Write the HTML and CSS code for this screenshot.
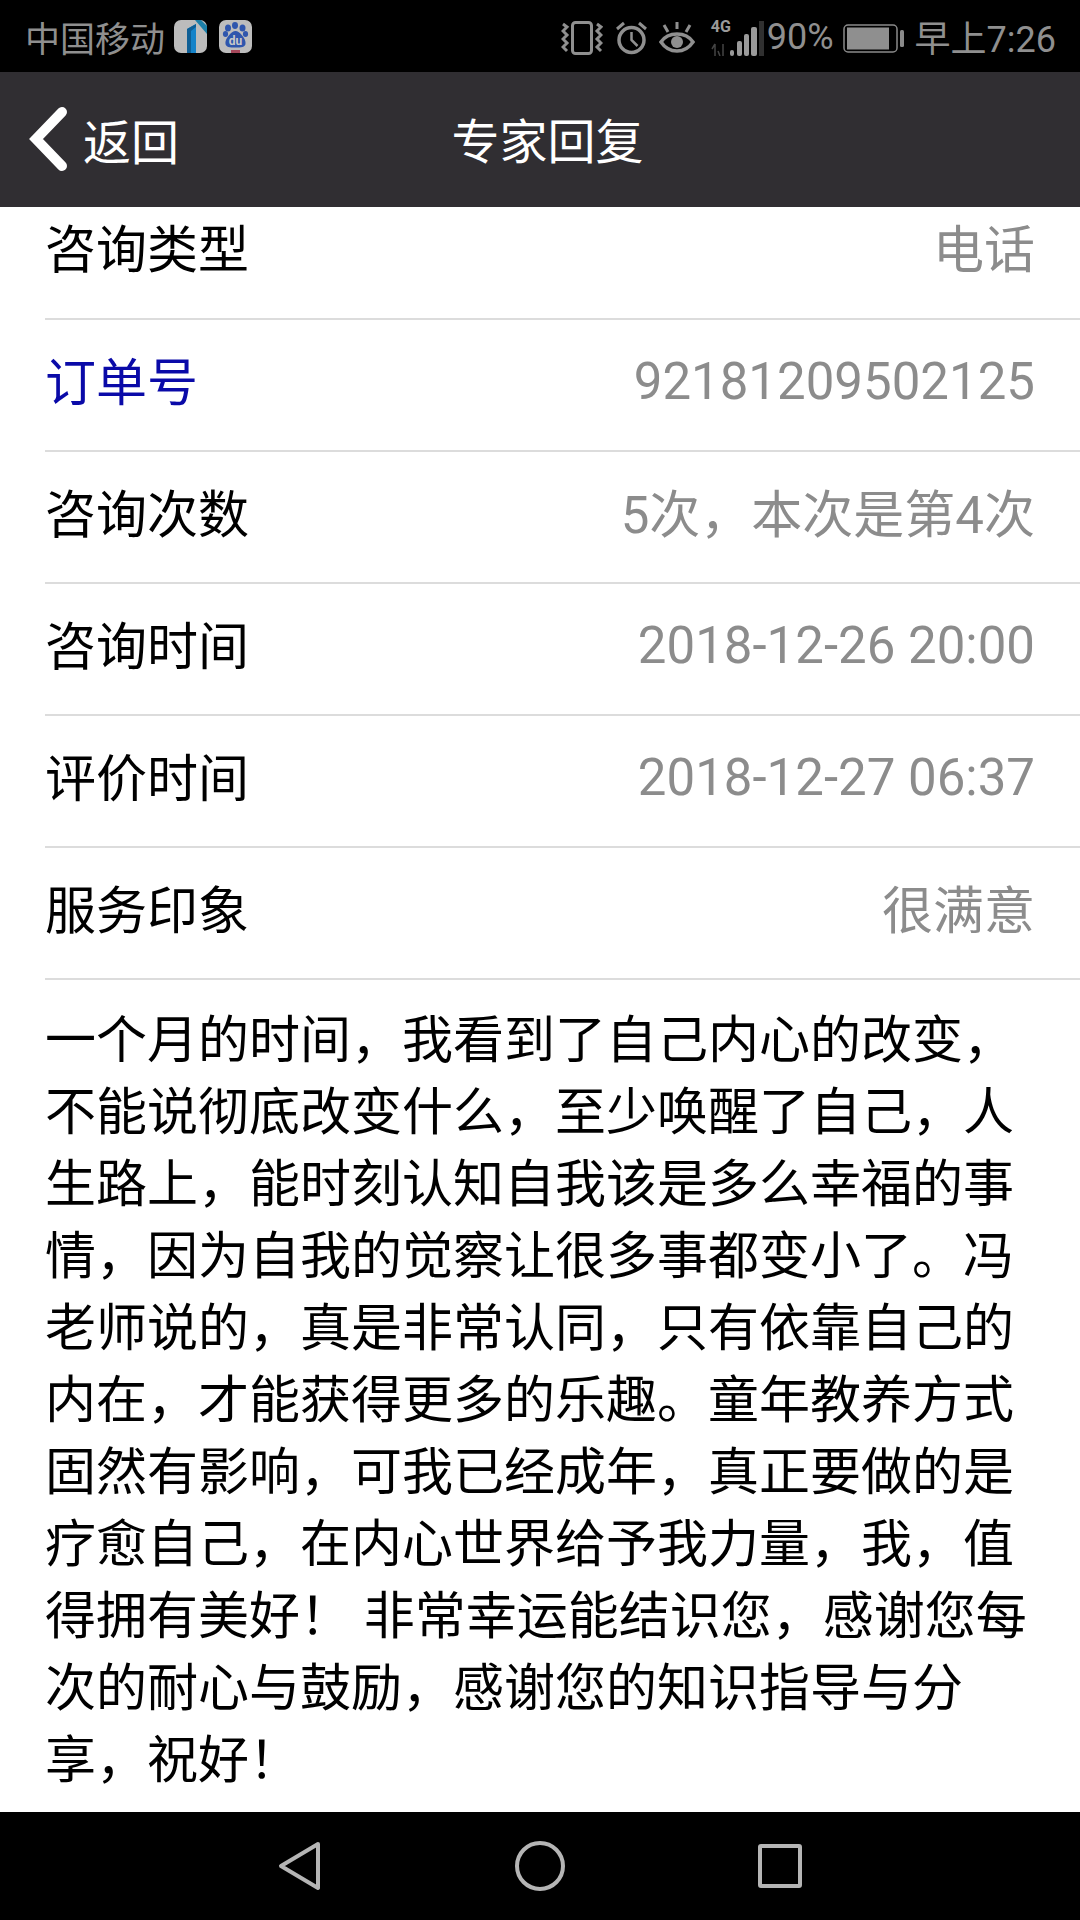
FILE: index.html
```html
<!DOCTYPE html>
<html lang="zh-CN">
<head>
    <meta charset="UTF-8">
    <title>专家回复</title>
    <link rel="stylesheet" href="styles.css">
</head>
<body>
    <div class="phone">
        <div class="status-bar">
            <div class="status-left">
                <span class="carrier">中国移动</span>
                <svg class="app-icon" viewBox="0 0 33 33">
                    <rect width="33" height="33" rx="7" fill="#bcbcbc"/>
                    <path d="M21 0h6l6 6v8z" fill="#1c7fa8"/>
                    <path d="M13 9l9-5v29h-9z" fill="#1583c9"/>
                    <path d="M13 9l9-5v3l-5 4v22h-4z" fill="#0f5f95"/>
                </svg>
                <svg class="app-icon" viewBox="0 0 33 33">
                    <rect width="33" height="33" rx="7" fill="#bdbdbd"/>
                    <g fill="#2f56ad">
                        <ellipse cx="9" cy="8" rx="3" ry="3.6"/>
                        <ellipse cx="16" cy="5.5" rx="3" ry="3.4"/>
                        <ellipse cx="23.5" cy="8" rx="3" ry="3.6"/>
                        <ellipse cx="6.5" cy="14" rx="2.6" ry="3"/>
                        <ellipse cx="26.5" cy="14" rx="2.6" ry="3"/>
                        <path d="M16.500 11c4 0 11 8 10 13-.5 3-4 3.500-10 3.500S7 27 6.500 24c-1-5 6-13 10-13z"/>
                    </g>
                    <text x="16.500" y="25" class="du">du</text>
                    <rect x="12" y="30" width="9" height="3" fill="#a5475a"/>
                </svg>
            </div>
            <div class="status-right">
                <svg class="s-icon vibrate" viewBox="0 0 42 34" fill="none" stroke="#8f8f8f" stroke-width="3">
                    <rect x="11.500" y="1.500" width="19" height="31" rx="3"/>
                    <path d="M2 3l4 3-4 4 4 4-4 4 4 4-4 4 4 4M36 3l4 3-4 4 4 4-4 4 4 4-4 4 4 4"/>
                </svg>
                <svg class="s-icon alarm" viewBox="0 0 33 34" fill="none" stroke="#8f8f8f" stroke-width="3.500">
                    <circle cx="16.500" cy="19" r="12.500"/>
                    <path d="M16.500 11v8l6 6" stroke-width="2.500"/>
                    <path d="M2 8l7-6M31 8l-7-6" stroke-width="3"/>
                </svg>
                <svg class="s-icon eye" viewBox="0 0 36 34" fill="none" stroke="#8f8f8f" stroke-width="3.500">
                    <path d="M2 21c4-6 9-8 16-8s12 2 16 8c-4 6-9 9-16 9s-12-3-16-9z"/>
                    <circle cx="18" cy="21" r="6" fill="#8f8f8f" stroke="none"/>
                    <path d="M18 1v7M5 4l4 7M31 4l-4 7" stroke-width="3"/>
                </svg>
                <div class="signal">
                    <span class="net">4G</span>
                    <svg class="bars" viewBox="0 0 53 35">
                        <path d="M4 23v12M9 35l-2-5M1 28l3-5M12 23v12" stroke="#444" stroke-width="1.500" fill="none"/>
                        <rect x="19" y="29" width="4" height="6" rx="2" fill="#9a9a9a"/>
                        <rect x="26" y="20" width="5" height="15" rx="2" fill="#9a9a9a"/>
                        <rect x="33" y="13" width="5" height="22" rx="2" fill="#9a9a9a"/>
                        <rect x="40" y="6" width="6" height="29" rx="2" fill="#9a9a9a"/>
                        <rect x="48" y="0" width="5" height="35" fill="#303030"/>
                    </svg>
                </div>
                <span class="status-text pct">90%</span>
                <svg class="battery" viewBox="0 0 61 29">
                    <rect x="1" y="1" width="53" height="27" rx="4" fill="none" stroke="#8a8a8a" stroke-width="1.500"/>
                    <rect x="4" y="3.500" width="42" height="22" fill="#8f8f8f"/>
                    <rect x="57" y="6" width="4" height="17" rx="1.500" fill="#8a8a8a"/>
                </svg>
                <span class="status-text time">早上7:26</span>
            </div>
        </div>

        <div class="nav-bar">
            <div class="back">
                <svg class="back-arrow" viewBox="0 0 38 66" fill="none" stroke="#fff" stroke-width="10" stroke-linecap="round">
                    <path d="M33 6L7 33l26 27"/>
                </svg>
                <span>返回</span>
            </div>
            <div class="nav-title">专家回复</div>
        </div>

        <div class="content">
            <div class="row first">
                <span class="label">咨询类型</span>
                <span class="value">电话</span>
            </div>
            <div class="row">
                <span class="label link">订单号</span>
                <span class="value num">92181209502125</span>
            </div>
            <div class="row">
                <span class="label">咨询次数</span>
                <span class="value">5次，本次是第4次</span>
            </div>
            <div class="row">
                <span class="label">咨询时间</span>
                <span class="value num">2018-12-26 20:00</span>
            </div>
            <div class="row">
                <span class="label">评价时间</span>
                <span class="value num">2018-12-27 06:37</span>
            </div>
            <div class="row">
                <span class="label">服务印象</span>
                <span class="value">很满意</span>
            </div>
            <p class="comment">一个月的时间，我看到了自己内心的改变，不能说彻底改变什么，至少唤醒了自己，人生路上，能时刻认知自我该是多么幸福的事情，因为自我的觉察让很多事都变小了。冯老师说的，真是非常认同，只有依靠自己的内在，才能获得更多的乐趣。童年教养方式固然有影响，可我已经成年，真正要做的是疗愈自己，在内心世界给予我力量，我，值得拥有美好！ 非常幸运能结识您，感谢您每次的耐心与鼓励，感谢您的知识指导与分享，祝好！</p>
        </div>

        <div class="bottom-bar">
            <svg class="nav-key" viewBox="0 0 50 50" fill="none" stroke="#b5b5b5" stroke-width="4" stroke-linejoin="round">
                <path d="M43 3L6 25l37 22z"/>
            </svg>
            <svg class="nav-key" viewBox="0 0 50 50" fill="none" stroke="#b5b5b5" stroke-width="4">
                <circle cx="25" cy="25" r="23"/>
            </svg>
            <svg class="nav-key" viewBox="0 0 50 50" fill="none" stroke="#b5b5b5" stroke-width="4" stroke-linejoin="round">
                <rect x="5" y="5" width="40" height="40" rx="1"/>
            </svg>
        </div>
    </div>
</body>
</html>
```

FILE: styles.css
```css
* {
    box-sizing: border-box;
}

body {
    margin: 0;
    background: #fff;
    font-family: Roboto, "Noto Sans CJK SC", sans-serif;
}

.phone {
    width: 1080px;
    height: 1920px;
    display: flex;
    flex-direction: column;
    overflow: hidden;
}

.status-bar {
    height: 72px;
    background: #000;
    color: #8f8f8f;
    display: flex;
    justify-content: space-between;
    align-items: center;
    padding: 0 24px 0 25px;
}

.status-left,
.status-right {
    display: flex;
    align-items: center;
}

.carrier {
    font-size: 35px;
    margin-right: 9px;
}

.app-icon {
    width: 33px;
    height: 33px;
    margin-right: 12px;
}

.du {
    font-size: 12px;
    font-weight: bold;
    fill: #c9c9c9;
    text-anchor: middle;
}

.s-icon {
    height: 34px;
    margin: 4px 12px 0 0;
}

.vibrate { width: 42px; }
.alarm { width: 33px; margin-right: 11px; }
.eye { width: 36px; margin-right: 16px; }

.signal {
    position: relative;
    width: 53px;
    height: 35px;
    margin: 4px 3px 0 0;
}

.net {
    position: absolute;
    left: 0;
    top: -2px;
    font-size: 16px;
    line-height: 16px;
    font-weight: bold;
    color: #9a9a9a;
}

.bars {
    position: absolute;
    left: 0;
    top: 0;
    width: 53px;
    height: 35px;
}

.status-text {
    font-size: 36px;
}

.pct {
    margin: 1px 9px 0 0;
}

.battery {
    width: 61px;
    height: 29px;
    margin: 4px 11px 0 0;
}

.nav-bar {
    height: 135px;
    padding-bottom: 4px;
    background: #302e32;
    color: #fff;
    position: relative;
    display: flex;
    align-items: center;
    justify-content: center;
    font-size: 48px;
}

.back {
    position: absolute;
    left: 29px;
    top: 32px;
    display: flex;
    align-items: center;
    gap: 16px;
}

.back-arrow {
    width: 38px;
    height: 66px;
}

.nav-title {
    margin-left: 15px;
}

.content {
    flex: 1;
    background: #fff;
    overflow: hidden;
}

.row {
    height: 132px;
    margin-left: 45px;
    padding: 0 45px 12px 0;
    border-bottom: 2px solid #dcdcdc;
    display: flex;
    justify-content: space-between;
    align-items: center;
    font-size: 51px;
}

.row.first {
    height: 113px;
    padding-bottom: 33px;
}

.label {
    color: #000;
}

.label.link {
    color: #0a0aa8;
}

.value {
    color: #8c8c8c;
}

.value.num {
    margin-top: 5px;
}

.comment {
    margin: 0;
    padding: 25px 34px 0 45px;
    color: #000;
    font-size: 51px;
    line-height: 72px;
}

.bottom-bar {
    height: 108px;
    background: #000;
    display: flex;
    justify-content: center;
    align-items: center;
    gap: 190px;
}

.nav-key {
    height: 50px;
    width: 50px;
}
```
